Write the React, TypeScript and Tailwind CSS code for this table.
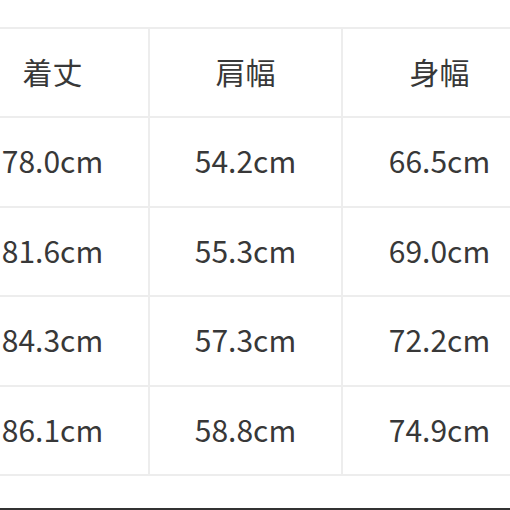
import React from "react";

const headers = ["着丈", "肩幅", "身幅"];
const rows = [
  ["78.0cm", "54.2cm", "66.5cm"],
  ["81.6cm", "55.3cm", "69.0cm"],
  ["84.3cm", "57.3cm", "72.2cm"],
  ["86.1cm", "58.8cm", "74.9cm"],
];

const font = { fontFamily: '"Noto Sans CJK JP", "Noto Sans", sans-serif' };

function Row({ cells }: { cells: string[] }) {
  return (
    <div className="flex h-[89.5px] border-b-[2.5px] border-[#ededed]">
      {cells.map((c, i) => (
        <div
          key={i}
          className={`flex w-[193px] shrink-0 items-center justify-center pb-[3px] text-[30px] leading-none text-[#383838] ${
            i < 2 ? "border-r-[2.5px] border-[#ededed]" : ""
          }`}
        >
          {c}
        </div>
      ))}
    </div>
  );
}

export default function App() {
  return (
    <div className="relative h-[510px] w-[510px] overflow-hidden bg-white" style={font}>
      <div className="pt-[26.5px]">
        <div className="ml-[-43px] w-[579px] border-t-[2.5px] border-[#ededed]">
          <Row cells={headers} />
          {rows.map((r, i) => (
            <Row key={i} cells={r} />
          ))}
        </div>
      </div>
      <div className="absolute bottom-0 left-0 h-[2px] w-full bg-[#333333]" />
    </div>
  );
}
